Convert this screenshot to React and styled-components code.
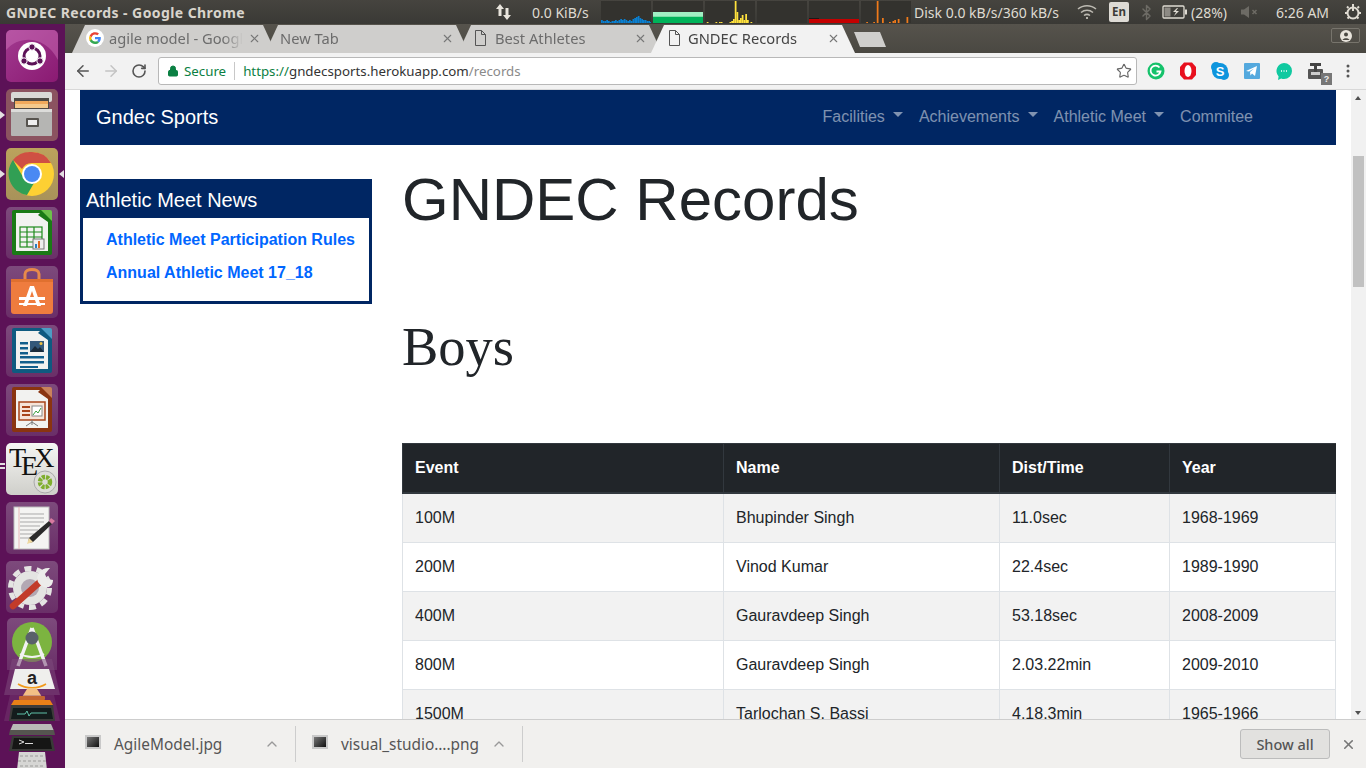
import styled, { createGlobalStyle } from "styled-components";
import { ArrowLeft, ArrowRight, RotateCw, Star, Lock, X, ChevronUp, Bluetooth } from "lucide-react";

const NAVY = "#002663";
const UI_FONT = `"Noto Sans", "Open Sans", sans-serif`;

const GlobalStyle = createGlobalStyle`
  html, body { margin: 0; padding: 0; height: 100%; overflow: hidden; background: #fff; }
  * { box-sizing: border-box; }
  body { font-family: "Liberation Sans", Arial, sans-serif; font-size: 16px; color: #212529; }
`;

const Desktop = styled.div`
  display: flex;
  flex-direction: column;
  width: 1366px;
  height: 768px;
  overflow: hidden;
`;

const Workspace = styled.div`
  display: flex;
  flex: 1;
  min-height: 0;
`;

/* ---------- top panel ---------- */

const Panel = styled.header`
  display: flex;
  align-items: center;
  height: 24px;
  flex: none;
  padding-left: 6px;
  background: linear-gradient(#46443f, #3a3935);
  color: #dfdbd2;
  font-family: ${UI_FONT};
  font-size: 14px;
  white-space: nowrap;
`;

const WindowTitle = styled.div`
  width: 489px;
  font-weight: 700;
  font-size: 14px;
  letter-spacing: 0.42px;
  color: #d8d4cc;
`;

const Readout = styled.div`
  margin-left: ${(p) => p.$left}px;
  width: ${(p) => p.$width}px;
  flex: none;
  color: ${(p) => p.$color || "#dfdbd2"};
`;

const TrayIcon = styled.svg`
  display: block;
  flex: none;
  margin-left: ${(p) => p.$left}px;
`;

const Graphs = styled.div`
  display: flex;
  gap: 2px;
  margin-left: 10px;
`;

const GraphSvg = styled.svg`
  display: block;
`;

const LangBox = styled.div`
  width: 20px;
  height: 20px;
  margin-left: 12px;
  border-radius: 2px;
  background: #dedbd5;
  color: #3c3b37;
  font-size: 11.5px;
  font-weight: 700;
  text-align: center;
  line-height: 20px;
`;

const graphData = [
  { color: "#0a7fd0", bars: [3, 2, 2, 3, 2, 1, 2, 2, 3, 2, 3, 4, 3, 4, 3, 2, 3, 2, 4, 5, 6, 7, 5, 4, 3, 3, 2, 2, 1] },
  { fill: true },
  { color: "#ffe13d", bars: [0, 1, 0, 0, 0, 0, 1, 0, 1, 1, 0, 0, 0, 0, 1, 2, 4, 23, 11, 3, 5, 8, 3, 9, 3, 0, 1, 0] },
  { color: "#333", bars: [] },
  { color: "#c40000", low: true },
  { color: "#ef7a1a", bars: [0, 0, 0, 1, 0, 0, 0, 1, 0, 24, 0, 0, 5, 0, 0, 0, 1, 0, 2, 3, 0, 4, 0, 0, 0, 0, 6] },
];

function Graph({ data }) {
  return (
    <GraphSvg width="50" height="22" viewBox="0 0 50 22">
      <rect width="50" height="22" fill="#33322e" />
      {data.fill && (
        <>
          <rect y="11" width="50" height="4" fill="#a0f0c4" />
          <rect y="15" width="50" height="1" fill="#7ce0a8" />
          <rect y="16" width="50" height="6" fill="#00b35a" />
        </>
      )}
      {data.low && (
        <>
          <rect y="17" width="10" height="1" fill="#1a1a1a" />
          <rect y="18" width="50" height="4" fill={data.color} />
        </>
      )}
      {data.bars &&
        data.bars.map((h, i) => (
          <rect key={i} x={i * 1.75} y={22 - h} width="1.75" height={h} fill={data.color} />
        ))}
    </GraphSvg>
  );
}

function TopPanel() {
  return (
    <Panel>
      <WindowTitle>GNDEC Records - Google Chrome</WindowTitle>
      <TrayIcon width="18" height="18" viewBox="0 0 18 18">
        <path d="M5 1 1 6h2.500v7h3V6H9z" fill="#e8e4dc" />
        <path d="M12 17l4-5h-2.500V5h-3v7H8z" fill="#e8e4dc" />
      </TrayIcon>
      <Readout $left={19} $width={59}>0.0 KiB/s</Readout>
      <Graphs>
        {graphData.map((g, i) => (
          <Graph key={i} data={g} />
        ))}
      </Graphs>
      <Readout $left={3} $width={155}>Disk 0.0 kB/s/360 kB/s</Readout>
      <TrayIcon $left={8} width="20" height="16" viewBox="0 0 20 16" fill="none" stroke="#bdbab2" strokeWidth="1.500">
        <path d="M1 5c5-4.500 13-4.500 18 0M4 8.500c3.500-3 8.500-3 12 0M7 11.500c2-1.500 4-1.500 6 0" />
        <circle cx="10" cy="14" r="1" fill="#dfdbd2" stroke="none" />
      </TrayIcon>
      <LangBox>En</LangBox>
      <Bluetooth size={17} color="#6d6b65" style={{ marginLeft: 9, flex: "none" }} />
      <TrayIcon $left={7} width="26" height="14" viewBox="0 0 26 14">
        <rect x="1" y="1" width="21" height="12" rx="1" fill="none" stroke="#dfdbd2" strokeWidth="1.300" />
        <rect x="2.500" y="2.500" width="6" height="9" fill="#8d8a84" />
        <rect x="23" y="4.500" width="2" height="5" fill="#dfdbd2" />
        <path d="M15 3l-4 4h3l-2 4 5-5h-3l2-3z" fill="#dfdbd2" />
      </TrayIcon>
      <Readout $left={3} $width={40}>(28%)</Readout>
      <TrayIcon $left={9} width="20" height="14" viewBox="0 0 20 14">
        <path d="M1 4.500h3L9 1v12L4 9.500H1z" fill="#6d6b65" />
        <path d="M12.500 5l4 4m0-4l-4 4" stroke="#6d6b65" strokeWidth="1.500" />
      </TrayIcon>
      <Readout $left={16} $width={58}>6:26 AM</Readout>
      <TrayIcon $left={10} width="18" height="18" viewBox="0 0 18 18" fill="none" stroke="#dfdbd2">
        <circle cx="9" cy="10" r="5.500" strokeWidth="2" />
        <path d="M9 1v7" strokeWidth="2" />
        <path d="M3 3.500 4.500 5M15 3.500 13.500 5M1 10h2M15 10h2M3.500 15.500 5 14M14.500 15.500 13 14" strokeWidth="2" />
      </TrayIcon>
    </Panel>
  );
}

/* ---------- launcher ---------- */

const Launcher = styled.nav`
  display: flex;
  flex-direction: column;
  align-items: center;
  flex: none;
  width: 65px;
  padding-top: 6px;
  padding-right: 1px;
  gap: 7px;
  background: #5c1257;
  overflow: hidden;
`;

const Tile = styled.div`
  position: relative;
  flex: none;
  width: 52px;
  height: 52px;
  border-radius: 5px;
  background: ${(p) => p.$bg || "linear-gradient(#7d4a7c, #6a2f68)"};
  display: flex;
  align-items: center;
  justify-content: center;
`;

const WideTile = styled(Tile)`
  width: 50px;
  margin-top: -2px;
  border-radius: 5px 5px 0 0;
`;

const PipLeft = styled.span`
  position: absolute;
  left: -6px;
  top: 22px;
  border: 4px solid transparent;
  border-left: 5px solid #e4dfe2;
`;

const PipRight = styled.span`
  position: absolute;
  right: -6px;
  top: 22px;
  border: 4px solid transparent;
  border-right: 5px solid #e4dfe2;
`;

const PipDouble = styled.span`
  position: absolute;
  left: -6px;
  top: 20px;
  width: 5px;
  height: 6px;
  border-top: 2px solid #e4dfe2;
  border-bottom: 2px solid #e4dfe2;
`;

const IconSvg = styled.svg`
  display: block;
  flex: none;
`;

const Icon = ({ children, size = 52, h }) => (
  <IconSvg width={size} height={h || size} viewBox={`0 0 ${size} ${h || size}`}>
    {children}
  </IconSvg>
);

const UbuntuIcon = () => (
  <Icon>
    <path d="M0 20C14 4 40 6 52 30V5a5 5 0 0 0-5-5H5a5 5 0 0 0-5 5z" fill="#d77cc2" opacity=".4" />
    <circle cx="26" cy="26" r="14" fill="#fff" />
    <circle cx="26" cy="26" r="8" fill="none" stroke="#5c1257" strokeWidth="3" />
    <circle cx="26" cy="17" r="3.200" fill="#5c1257" stroke="#fff" />
    <circle cx="18" cy="31" r="3.200" fill="#5c1257" stroke="#fff" />
    <circle cx="34" cy="31" r="3.200" fill="#5c1257" stroke="#fff" />
  </Icon>
);

const FilesIcon = () => (
  <Icon>
    <rect x="5" y="3" width="41" height="10" rx="2" fill="#d9d9d6" />
    <rect x="8" y="9" width="35" height="12" fill="#4e4a45" />
    <rect x="9" y="12" width="33" height="5" fill="#f0a95c" />
    <rect x="9" y="15" width="33" height="4" fill="#f4c98c" />
    <rect x="5" y="20" width="41" height="27" rx="1" fill="#b5b5b3" />
    <rect x="5" y="20" width="41" height="3" fill="#dcdcda" />
    <rect x="20" y="29" width="13" height="9" rx="1" fill="#57544f" />
    <rect x="22" y="31" width="9" height="5" fill="#eeeeee" />
  </Icon>
);

const ChromeIcon = () => (
  <Icon>
    <circle cx="26" cy="26" r="22" fill="#fdd033" />
    <path d="M26 4a22 22 0 0 1 19 11H26a11 11 0 0 0-10 6L7 12A22 22 0 0 1 26 4z" fill="#cf5043" />
    <path d="M7 12l10 17a10 10 0 0 0 11 6l-7 12A22 22 0 0 1 7 12z" fill="#319f54" />
    <circle cx="26" cy="26" r="10" fill="#fff" />
    <circle cx="26" cy="26" r="8" fill="#4a89f3" />
  </Icon>
);

const DocIcon = ({ edge, corner, children }) => (
  <Icon>
    <path d="M8 3h28l10 10v33a2 2 0 0 1-2 2H8a2 2 0 0 1-2-2V5a2 2 0 0 1 2-2z" fill={edge} />
    <path d="M10 6h24l-2 2 10 7v29H10z" fill="#f2f2f0" />
    <path d="M35 3h9a2 2 0 0 1 2 2v9z" fill={corner} />
    {children}
  </Icon>
);

const CalcIcon = () => (
  <DocIcon edge="#1a7a16" corner="#6cc04a">
    <g fill="none" stroke="#1d8a1c" strokeWidth="1.200">
      <rect x="14" y="20" width="22" height="20" />
      <path d="M14 25h22M14 30h22M14 35h22M21 20v20M28 20v20" />
    </g>
    <rect x="27" y="32" width="11" height="10" fill="#eee" stroke="#777" />
    <rect x="29" y="37" width="2" height="4" fill="#2a7fc0" />
    <rect x="32" y="34" width="2" height="7" fill="#e06a20" />
  </DocIcon>
);

const StoreIcon = () => (
  <Icon>
    <path d="M19 14V8c0-6 14-6 14 0v6" fill="none" stroke="#e88a4a" strokeWidth="3" />
    <path d="M5 13h42v32a3 3 0 0 1-3 3H8a3 3 0 0 1-3-3z" fill="#ef7c3e" />
    <path d="M5 13h42v3H5z" fill="#e0702f" />
    <path d="M24 20h4l7 20h-4l-5-15-5 15h-4z" fill="#fff" />
    <rect x="13" y="31" width="26" height="3" fill="#fff" />
    <rect x="13" y="37" width="26" height="2" fill="#fff" />
  </Icon>
);

const WriterIcon = () => (
  <DocIcon edge="#0f5a80" corner="#4d9cc4">
    <rect x="14" y="17" width="8" height="2.500" fill="#125e8c" />
    <rect x="14" y="22" width="8" height="2.500" fill="#125e8c" />
    <rect x="14" y="27" width="8" height="2.500" fill="#125e8c" />
    <rect x="24" y="16" width="14" height="11" fill="#34587a" />
    <path d="M24 27l5-6 3 3 2-2 4 5z" fill="#1a2a3a" />
    <circle cx="35" cy="18.500" r="1.500" fill="#f0c040" />
    <rect x="14" y="31" width="24" height="2.500" fill="#125e8c" />
    <rect x="14" y="36" width="24" height="2.500" fill="#125e8c" />
    <rect x="14" y="41" width="18" height="2" fill="#125e8c" />
  </DocIcon>
);

const ImpressIcon = () => (
  <DocIcon edge="#8a3410" corner="#c9825c">
    <rect x="13" y="18" width="26" height="18" fill="#f6e4d8" stroke="#a8441a" strokeWidth="1.500" />
    <rect x="16" y="22" width="8" height="2" fill="#a8441a" />
    <rect x="16" y="26" width="8" height="2" fill="#a8441a" />
    <rect x="16" y="30" width="8" height="2" fill="#a8441a" />
    <rect x="26" y="22" width="10" height="10" fill="#fff" stroke="#888" />
    <path d="M27 31l3-4 2 2 3-5" fill="none" stroke="#3aa040" />
    <path d="M26 36v5M26 38l-6 4M26 38l6 4" stroke="#777" />
  </DocIcon>
);

const TexIcon = () => (
  <Icon>
    <text x="3" y="24" fontFamily="Liberation Serif" fontSize="28" fill="#111">
      T<tspan dx="-5" dy="8">E</tspan><tspan dx="-4" dy="-8">X</tspan>
    </text>
    <circle cx="39" cy="39" r="11" fill="#dcdcd8" stroke="#aaa" />
    <circle cx="39" cy="39" r="5" fill="none" stroke="#7fae2e" strokeWidth="4.500" strokeDasharray="3 1" />
  </Icon>
);

const EditorIcon = () => (
  <Icon>
    <rect x="8" y="5" width="35" height="42" fill="#f4f4f2" stroke="#bbb" />
    <g stroke="#a9a9a9" strokeWidth="1">
      <path d="M14 12h24M14 16h24M14 20h24M14 24h20M14 28h18M14 32h14M14 36h10" />
    </g>
    <path d="M13 5v42" stroke="#e8b8b8" />
    <path d="M43 19l3 3-19 18-5 1 1-5z" fill="#2a2a2a" />
    <path d="M43 19l2-3 4 3-3 3z" fill="#d77aa0" />
    <path d="M23 36l4 4-6 2z" fill="#efd9a0" />
  </Icon>
);

const SettingsIcon = () => (
  <Icon>
    <circle cx="24" cy="27" r="19.500" fill="none" stroke="#e4e4e2" strokeWidth="5" strokeDasharray="7 5.250" />
    <circle cx="24" cy="27" r="17" fill="#e4e4e2" />
    <circle cx="24" cy="27" r="9" fill="#b3a8b3" />
    <path d="M7 45l28-25" stroke="#c23b2a" strokeWidth="6.500" strokeLinecap="round" />
    <path d="M32 21c-3-7 3-15 12-14l-5 6 2 5 6 1c0 8-9 11-15 2z" fill="#ececea" />
  </Icon>
);

const AndroidIcon = () => (
  <Icon size={50} h={52}>
    <circle cx="25" cy="24" r="20" fill="#7cb440" />
    <path d="M25 10l-14 38M25 10l14 38" stroke="#f2f2f2" strokeWidth="3.500" />
    <path d="M13 36c7 4 17 4 24 0" fill="none" stroke="#f2f2f2" strokeWidth="2" />
    <circle cx="25" cy="20" r="6.500" fill="#59616a" />
  </Icon>
);

function LauncherStack() {
  return (
    <Icon size={64} h={111}>
      {/* amazon */}
      <path d="M12 0h40l8 36H4z" fill="#7d4a7c" opacity=".55" />
      <path d="M15 10h34l6 20H10z" fill="#efefed" />
      <text x="32" y="25" textAnchor="middle" fontFamily="Liberation Sans" fontWeight="700" fontSize="18" fill="#222">a</text>
      <path d="M18 25c8 5 20 5 28 0" fill="none" stroke="#f29a1a" strokeWidth="1.500" />
      {/* vlc */}
      <path d="M27 30h10l5 8H22z" fill="#f3c086" />
      <rect x="19" y="37" width="26" height="4" rx="1" fill="#e8760c" />
      {/* monitor */}
      <path d="M10 36h44l6 26H4z" fill="#7d4a7c" opacity=".35" />
      <path d="M14 41h36l3 5H11z" fill="#e88018" />
      <path d="M11 46h42l2 16H9z" fill="#3c3c3a" />
      <path d="M13 49h38l2 11H11z" fill="#131c1c" />
      <path d="M17 55h8l2-3 2 5 2-3h16" fill="none" stroke="#5fc0a8" />
      {/* terminal */}
      <path d="M13 65h38l3 7H10z" fill="#b9b9b7" />
      <path d="M10 71h44l1 5H9z" fill="#55544f" />
      <path d="M12 77h40l3 15H9z" fill="#3a3a38" />
      <path d="M14 79h36l2 11H12z" fill="#161615" />
      <path d="M19 81l5 2-5 2" fill="none" stroke="#ddd" />
      <rect x="25" y="84" width="8" height="1" fill="#ddd" />
      {/* trash */}
      <path d="M19 93h26l2 18H17z" fill="#d6d6d4" />
      <path d="M20 97h24M18 102h28M20 107h24" stroke="#9c9c9a" strokeDasharray="3 2" />
    </Icon>
  );
}

const StackWrap = styled.div`
  flex: none;
  margin-top: -18px;
  position: relative;
`;

function DockBar() {
  return (
    <Launcher>
      <Tile $bg="linear-gradient(135deg, #a23a90, #8a1a72)"><UbuntuIcon /></Tile>
      <Tile $bg="#8b5360"><PipLeft /><FilesIcon /></Tile>
      <Tile $bg="linear-gradient(#bba25c, #a8925a)"><PipLeft /><PipRight /><ChromeIcon /></Tile>
      <Tile><CalcIcon /></Tile>
      <Tile><StoreIcon /></Tile>
      <Tile><WriterIcon /></Tile>
      <Tile><ImpressIcon /></Tile>
      <Tile $bg="linear-gradient(#f6f6f4, #cfcfca)"><PipDouble /><TexIcon /></Tile>
      <Tile><EditorIcon /></Tile>
      <Tile><SettingsIcon /></Tile>
      <WideTile><AndroidIcon /></WideTile>
      <StackWrap><LauncherStack /></StackWrap>
    </Launcher>
  );
}

/* ---------- browser chrome ---------- */

const Browser = styled.div`
  display: flex;
  flex-direction: column;
  flex: 1;
  min-width: 0;
`;

const TabStrip = styled.div`
  display: flex;
  align-items: flex-end;
  position: relative;
  flex: none;
  height: 29px;
  padding-left: 7px;
  background: linear-gradient(#56534c, #4a4842);
`;

const Tab = styled.div`
  position: relative;
  flex: none;
  width: 208px;
  height: 28px;
  margin-right: -15px;
  padding: 0 19px 2px ${(p) => p.$padLeft}px;
  display: flex;
  align-items: center;
  gap: ${(p) => p.$gap || 6}px;
  font-family: ${UI_FONT};
  font-size: 14.700px;
  color: ${(p) => (p.$active ? "#444" : "#6c6c6c")};
  background: ${(p) => (p.$active ? "#f2f2f2" : "#cfcecc")};
  clip-path: polygon(0 100%, 13px 0, calc(100% - 17px) 0, calc(100% - 4px) 100%);
  z-index: ${(p) => (p.$active ? 2 : 1)};
`;

const TabTitle = styled.span`
  flex: 1;
  overflow: hidden;
  white-space: nowrap;
  -webkit-mask-image: linear-gradient(to right, #000 85%, transparent 100%);
  mask-image: linear-gradient(to right, #000 85%, transparent 100%);
`;

const NewTabButton = styled.div`
  position: absolute;
  left: 789px;
  top: 8px;
  width: 32px;
  height: 15px;
  background: #cfcecc;
  clip-path: polygon(0 0, 26px 0, 100% 100%, 6px 100%);
`;

const ProfileButton = styled.div`
  position: absolute;
  right: 6px;
  top: 4px;
  width: 29px;
  height: 15px;
  border: 1px solid #77746c;
  border-radius: 2px;
  display: flex;
  align-items: center;
  justify-content: center;
`;

const Toolbar = styled.div`
  display: flex;
  align-items: center;
  flex: none;
  height: 37px;
  background: #f2f2f2;
  padding: 0 0 1px 4px;
  border-bottom: 1px solid #d8d8d8;
`;

const NavButton = styled.div`
  width: 28px;
  display: flex;
  justify-content: center;
`;

const Omnibox = styled.div`
  display: flex;
  align-items: center;
  flex: none;
  width: 979px;
  height: 28px;
  margin-left: 5px;
  padding: 0 4px 0 8px;
  background: #fff;
  border: 1px solid #b8b8b8;
  border-radius: 3px;
  font-family: ${UI_FONT};
  font-size: 13.300px;
  white-space: nowrap;
`;

const SecureLabel = styled.span`
  margin-left: 5px;
  padding-right: 8px;
  color: #0b8043;
  border-right: 1px solid #c8c8c8;
  line-height: 18px;
`;

const UrlScheme = styled.span`
  margin-left: 8px;
  color: #0b8043;
`;

const UrlHost = styled.span`
  color: #333;
`;

const UrlPath = styled.span`
  flex: 1;
  color: #8a8a8a;
`;

const Extensions = styled.div`
  display: flex;
  align-items: center;
  gap: 12px;
  margin-left: 9px;
`;

const ExtBadge = styled.div`
  position: relative;
  width: 20px;
  height: 20px;
`;

const HelpBadge = styled.span`
  position: absolute;
  right: -6px;
  bottom: -4px;
  width: 11px;
  height: 12px;
  background: #777;
  color: #eee;
  font-size: 9px;
  line-height: 12px;
  text-align: center;
  font-weight: 700;
`;

const Dots = styled.svg`
  display: block;
  flex: none;
  margin-left: 20px;
`;

const TabGlyph = styled.svg`
  display: block;
  flex: none;
`;

const GoogleG = () => (
  <TabGlyph width="18" height="18" viewBox="0 0 18 18">
    <circle cx="9" cy="9" r="9" fill="#fff" />
    <path d="M14.800 9.200c0-.5 0-.9-.1-1.300H9v2.400h3.300c-.2.800-.6 1.400-1.200 1.800l1.900 1.500c1.100-1 1.800-2.500 1.800-4.400z" fill="#4285f4" />
    <path d="M9 15c1.600 0 3-.5 4-1.500l-1.900-1.500c-.5.400-1.200.6-2.100.6-1.600 0-2.900-1-3.400-2.500l-2 1.500C4.600 13.700 6.600 15 9 15z" fill="#34a853" />
    <path d="M5.600 10.600a3.600 3.600 0 0 1 0-2.300l-2-1.500a6 6 0 0 0 0 5.300z" fill="#fbbc05" />
    <path d="M9 5.400c.9 0 1.700.3 2.300.9l1.700-1.700A6 6 0 0 0 3.600 6.800l2 1.500C6.100 6.500 7.400 5.400 9 5.400z" fill="#ea4335" />
  </TabGlyph>
);

const PageGlyph = () => (
  <TabGlyph width="13" height="16" viewBox="0 0 13 16" fill="none" stroke="#555">
    <path d="M1.500.5h6l4 4v11h-10zM7.500.5v4h4" />
  </TabGlyph>
);

const tabClose = <X size={13} color="#777" strokeWidth={2} style={{ flex: "none" }} />;

function TabBar() {
  return (
    <TabStrip>
      <Tab $padLeft={14} $gap={5}><GoogleG /><TabTitle>agile model - Google</TabTitle>{tabClose}</Tab>
      <Tab $padLeft={15}><TabTitle>New Tab</TabTitle>{tabClose}</Tab>
      <Tab $padLeft={16} $gap={8}><PageGlyph /><TabTitle>Best Athletes</TabTitle>{tabClose}</Tab>
      <Tab $active $padLeft={17} $gap={7}><PageGlyph /><TabTitle>GNDEC Records</TabTitle>{tabClose}</Tab>
      <NewTabButton />
      <ProfileButton>
        <svg width="12" height="12" viewBox="0 0 12 12">
          <circle cx="6" cy="6" r="6" fill="#e8e4dc" />
          <circle cx="6" cy="4.500" r="2" fill="#4a4842" />
          <path d="M2.500 10c1-2.500 6-2.500 7 0z" fill="#4a4842" />
        </svg>
      </ProfileButton>
    </TabStrip>
  );
}

function AddressBar() {
  return (
    <Toolbar>
      <NavButton><ArrowLeft size={18} color="#555" strokeWidth={2} /></NavButton>
      <NavButton><ArrowRight size={18} color="#c4c4c4" strokeWidth={2} /></NavButton>
      <NavButton><RotateCw size={16} color="#555" strokeWidth={2.400} /></NavButton>
      <Omnibox>
        <Lock size={12} color="#0b8043" fill="#0b8043" style={{ flex: "none" }} />
        <SecureLabel>Secure</SecureLabel>
        <UrlScheme>https://</UrlScheme>
        <UrlHost>gndecsports.herokuapp.com</UrlHost>
        <UrlPath>/records</UrlPath>
        <Star size={16} color="#666" strokeWidth={1.700} style={{ flex: "none" }} />
      </Omnibox>
      <Extensions>
        <ExtBadge>
          <svg width="20" height="20" viewBox="0 0 20 20">
            <circle cx="10" cy="10" r="8.500" fill="#15c26b" />
            <path d="M13.500 6.500a5 5 0 1 0 1 4h-4" fill="none" stroke="#fff" strokeWidth="1.800" />
          </svg>
        </ExtBadge>
        <ExtBadge>
          <svg width="20" height="20" viewBox="0 0 20 20">
            <path d="M6 1.500h8L18 6v8l-4 4.500H6L2 14V6z" fill="#e8101e" />
            <ellipse cx="10" cy="10" rx="3.500" ry="6" fill="#fff" />
          </svg>
        </ExtBadge>
        <ExtBadge>
          <svg width="20" height="20" viewBox="0 0 20 20">
            <circle cx="6" cy="6" r="5" fill="#0e95dd" />
            <circle cx="14" cy="14" r="5" fill="#0e95dd" />
            <circle cx="10" cy="10" r="8" fill="#0e95dd" />
            <text x="10" y="14.500" textAnchor="middle" fontFamily="Liberation Sans" fontWeight="700" fontSize="13" fill="#fff">S</text>
          </svg>
        </ExtBadge>
        <ExtBadge>
          <svg width="20" height="20" viewBox="0 0 20 20">
            <rect x="2" y="2" width="16" height="16" rx="1" fill="#54a9de" />
            <path d="M4 10l11-5-2 10-3-2.500-1.500 2-.5-3.500 4-3.500-5 3z" fill="#fff" />
          </svg>
        </ExtBadge>
        <ExtBadge>
          <svg width="20" height="20" viewBox="0 0 20 20">
            <path d="M10 2a8 8 0 0 1 0 16c-1 0-2-.1-2.800-.5L4 19l.6-3.600A8 8 0 0 1 10 2z" fill="#10c9a0" />
            <path d="M7 10h1M9.500 10h1M12 10h1" stroke="#fff" strokeWidth="1.500" />
          </svg>
        </ExtBadge>
        <ExtBadge>
          <svg width="20" height="20" viewBox="0 0 20 20">
            <rect x="2" y="8" width="15" height="10" rx="1" fill="#555" />
            <rect x="4" y="2" width="11" height="3" fill="#444" />
            <rect x="8" y="2" width="3" height="10" fill="#444" />
            <rect x="5" y="11" width="9" height="3" fill="#ccc" />
          </svg>
          <HelpBadge>?</HelpBadge>
        </ExtBadge>
      </Extensions>
      <Dots width="4" height="14" viewBox="0 0 4 14" fill="#555">
        <circle cx="2" cy="2" r="1.500" />
        <circle cx="2" cy="7" r="1.500" />
        <circle cx="2" cy="12" r="1.500" />
      </Dots>
    </Toolbar>
  );
}

/* ---------- the web page ---------- */

const Viewport = styled.div`
  display: flex;
  flex: 1;
  min-height: 0;
  background: #fff;
`;

const Page = styled.main`
  flex: 1;
  min-width: 0;
  padding: 0 15px;
  overflow: hidden;
`;

const Scrollbar = styled.div`
  position: relative;
  flex: none;
  width: 15px;
  background: #f1f1f1;
`;

const ScrollThumb = styled.div`
  position: absolute;
  left: 2px;
  right: 2px;
  top: 66px;
  height: 131px;
  background: #c1c1c1;
`;

const ScrollArrow = styled.span`
  position: absolute;
  left: 4px;
  ${(p) => (p.$down ? "bottom: 4px; border-top: 4px solid #505050;" : "top: 6px; border-bottom: 4px solid #505050;")}
  border-left: 3.500px solid transparent;
  border-right: 3.500px solid transparent;
`;

const Navbar = styled.div`
  display: flex;
  align-items: center;
  justify-content: space-between;
  height: 55px;
  padding: 0 75px 0 16px;
  background: ${NAVY};
`;

const Brand = styled.a`
  color: #fff;
  font-size: 20px;
`;

const NavLinks = styled.div`
  display: flex;
  padding-bottom: 2px;
`;

const NavLink = styled.a`
  padding: 0 8px;
  color: rgba(255, 255, 255, 0.5);
  font-size: 16px;
  line-height: 24px;
  white-space: nowrap;
  ${(p) =>
    p.$caret &&
    `
    &::after {
      content: "";
      display: inline-block;
      margin-left: 8.100px;
      vertical-align: 0.255em;
      border-top: 5.500px solid;
      border-left: 5.500px solid transparent;
      border-right: 5.500px solid transparent;
    }
  `}
`;

const Columns = styled.div`
  display: grid;
  grid-template-columns: 292px 1fr;
  gap: 30px;
`;

const NewsBox = styled.aside`
  margin-top: 34px;
  height: 125px;
  border: 3px solid ${NAVY};
  border-top: 0;
`;

const NewsTitle = styled.h3`
  margin: 0 -3px;
  padding: 9px 6px 0;
  height: 39px;
  background: ${NAVY};
  color: #fff;
  font-size: 20px;
  font-weight: 400;
  line-height: 24px;
`;

const NewsList = styled.ul`
  list-style: none;
  margin: 0;
  padding: 10px 0 0 23px;
`;

const NewsItem = styled.li`
  height: 33px;
  line-height: 24px;
`;

const NewsLink = styled.a`
  color: #0066ff;
  font-weight: 700;
`;

const Heading = styled.h1`
  margin: 19px 0 0;
  font-size: 60px;
  font-weight: 400;
  line-height: 72px;
`;

const SubHeading = styled.h2`
  margin: 77px 0 0;
  font-family: "Liberation Serif", "Times New Roman", serif;
  font-size: 54.500px;
  font-weight: 400;
  line-height: 67px;
`;

const RecordsTable = styled.table`
  width: 934px;
  margin-top: 63px;
  border-collapse: separate;
  border-spacing: 0;
  table-layout: fixed;
`;

const HeadCell = styled.th`
  width: ${(p) => p.$width}px;
  padding: 12px;
  background: #212529;
  color: #fff;
  border-top: 1px solid #32383e;
  border-left: 1px solid #32383e;
  border-bottom: 2px solid #32383e;
  text-align: left;
  line-height: 24px;
`;

const Row = styled.tr`
  background: ${(p) => (p.$striped ? "#f2f2f2" : "#fff")};
`;

const Cell = styled.td`
  padding: 12px;
  border-left: 1px solid #dee2e6;
  border-bottom: 1px solid #dee2e6;
  line-height: 24px;
  &:last-child {
    border-right: 1px solid #dee2e6;
  }
`;

const columns = [
  { label: "Event", width: 321 },
  { label: "Name", width: 276 },
  { label: "Dist/Time", width: 170 },
  { label: "Year", width: 167 },
];

const records = [
  ["100M", "Bhupinder Singh", "11.0sec", "1968-1969"],
  ["200M", "Vinod Kumar", "22.4sec", "1989-1990"],
  ["400M", "Gauravdeep Singh", "53.18sec", "2008-2009"],
  ["800M", "Gauravdeep Singh", "2.03.22min", "2009-2010"],
  ["1500M", "Tarlochan S. Bassi", "4.18.3min", "1965-1966"],
];

function WebPage() {
  return (
    <Viewport>
      <Page>
        <Navbar>
          <Brand>Gndec Sports</Brand>
          <NavLinks>
            <NavLink $caret>Facilities</NavLink>
            <NavLink $caret>Achievements</NavLink>
            <NavLink $caret>Athletic Meet</NavLink>
            <NavLink>Commitee</NavLink>
          </NavLinks>
        </Navbar>
        <Columns>
          <div>
            <NewsBox>
              <NewsTitle>Athletic Meet News</NewsTitle>
              <NewsList>
                <NewsItem><NewsLink>Athletic Meet Participation Rules</NewsLink></NewsItem>
                <NewsItem><NewsLink>Annual Athletic Meet 17_18</NewsLink></NewsItem>
              </NewsList>
            </NewsBox>
          </div>
          <div>
            <Heading>GNDEC Records</Heading>
            <SubHeading>Boys</SubHeading>
            <RecordsTable>
              <thead>
                <tr>
                  {columns.map((c) => (
                    <HeadCell key={c.label} $width={c.width}>{c.label}</HeadCell>
                  ))}
                </tr>
              </thead>
              <tbody>
                {records.map((r, i) => (
                  <Row key={r[0]} $striped={i % 2 === 0}>
                    {r.map((v, j) => (
                      <Cell key={j}>{v}</Cell>
                    ))}
                  </Row>
                ))}
              </tbody>
            </RecordsTable>
          </div>
        </Columns>
      </Page>
      <Scrollbar>
        <ScrollArrow />
        <ScrollThumb />
        <ScrollArrow $down />
      </Scrollbar>
    </Viewport>
  );
}

/* ---------- download shelf ---------- */

const Shelf = styled.footer`
  display: flex;
  align-items: center;
  flex: none;
  height: 49px;
  padding-left: 20px;
  background: #f1f0ee;
  border-top: 1px solid #cdcdcd;
  font-family: ${UI_FONT};
  font-size: 15.400px;
  color: #555;
`;

const DownloadItem = styled.div`
  display: flex;
  align-items: center;
  width: ${(p) => p.$width}px;
  height: 36px;
  flex: none;
  border-right: 1px solid #cdcdcd;
  margin-right: ${(p) => p.$gap}px;
`;

const FileThumb = styled.span`
  flex: none;
  width: 16px;
  height: 14px;
  margin-top: -4px;
  border: 2px solid #c9c9c9;
  background: linear-gradient(135deg, #777, #111);
`;

const FileName = styled.span`
  flex: 1;
  margin-left: 13px;
  white-space: nowrap;
`;

const ShelfSpacer = styled.div`
  flex: 1;
`;

const ShowAll = styled.button`
  width: 90px;
  height: 30px;
  border: 1px solid #bcbcbc;
  border-radius: 3px;
  background: #e2e1df;
  color: #555;
  font-family: ${UI_FONT};
  font-size: 14.500px;
  font-weight: 500;
`;

const ShelfClose = styled.div`
  display: flex;
  justify-content: center;
  width: 36px;
`;

function DownloadShelf() {
  return (
    <Shelf>
      <DownloadItem $width={211} $gap={16}>
        <FileThumb />
        <FileName>AgileModel.jpg</FileName>
        <ChevronUp size={16} color="#999" strokeWidth={2} style={{ marginRight: 15, flex: "none" }} />
      </DownloadItem>
      <DownloadItem $width={211} $gap={0}>
        <FileThumb />
        <FileName>visual_studio….png</FileName>
        <ChevronUp size={16} color="#999" strokeWidth={2} style={{ marginRight: 15, flex: "none" }} />
      </DownloadItem>
      <ShelfSpacer />
      <ShowAll>Show all</ShowAll>
      <ShelfClose><X size={15} color="#777" strokeWidth={2.500} /></ShelfClose>
    </Shelf>
  );
}

export default function App() {
  return (
    <Desktop>
      <GlobalStyle />
      <TopPanel />
      <Workspace>
        <DockBar />
        <Browser>
          <TabBar />
          <AddressBar />
          <WebPage />
          <DownloadShelf />
        </Browser>
      </Workspace>
    </Desktop>
  );
}
